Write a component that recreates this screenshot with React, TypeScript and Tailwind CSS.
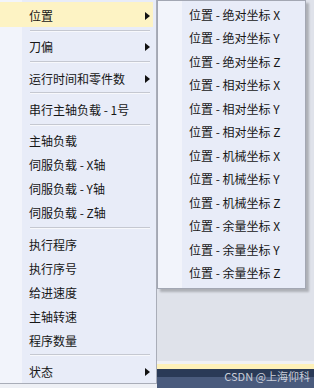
import React from "react";

type Item = { label: string; sub?: boolean; active?: boolean } | "sep";

const mainItems: Item[] = [
  { label: "位置", sub: true, active: true },
  "sep",
  { label: "刀偏", sub: true },
  "sep",
  { label: "运行时间和零件数", sub: true },
  "sep",
  { label: "串行主轴负载 - 1号" },
  "sep",
  { label: "主轴负载" },
  { label: "伺服负载 - X轴" },
  { label: "伺服负载 - Y轴" },
  { label: "伺服负载 - Z轴" },
  "sep",
  { label: "执行程序" },
  { label: "执行序号" },
  { label: "给进速度" },
  { label: "主轴转速" },
  { label: "程序数量" },
  "sep",
  { label: "状态", sub: true },
];

const subItems = [
  "位置 - 绝对坐标 X",
  "位置 - 绝对坐标 Y",
  "位置 - 绝对坐标 Z",
  "位置 - 相对坐标 X",
  "位置 - 相对坐标 Y",
  "位置 - 相对坐标 Z",
  "位置 - 机械坐标 X",
  "位置 - 机械坐标 Y",
  "位置 - 机械坐标 Z",
  "位置 - 余量坐标 X",
  "位置 - 余量坐标 Y",
  "位置 - 余量坐标 Z",
];

function Arrow() {
  return (
    <svg width="5" height="8" viewBox="0 0 5 8" className="shrink-0">
      <polygon points="0,0 5,4 0,8" fill="#111" />
    </svg>
  );
}

export default function App() {
  return (
    <div
      className="w-[314px] h-[388px] overflow-hidden flex bg-[#dfe2ea] text-[12px] text-[#161616] relative"
      style={{ fontFamily: '"Noto Sans CJK SC", "Noto Sans", sans-serif' }}
    >
      {/* Main context menu */}
      <div className="w-[157px] h-full flex flex-col shrink-0">
        <div className="h-[384px] flex flex-col pt-[2px] border-r border-b border-[#a9adb8] bg-[linear-gradient(to_right,#f2f4fb_22px,#e8ecf8_22px)]">
          {mainItems.map((it, i) =>
            it === "sep" ? (
              <div key={i} className="h-[8px] flex flex-col justify-center ml-[30px] mr-[6px]">
                <div className="h-px bg-[#c5c8d1]" />
                <div className="h-px bg-[#f7f8fc]" />
              </div>
            ) : (
              <div
                key={i}
                className={
                  "flex items-center pl-[29px] pr-[3px] pt-[2px] mr-[3px] shrink-0 " +
                  (it.active ? "h-[25px] bg-[#fdf3c4]" : "h-[24px]")
                }
              >
                <span className="flex-1 whitespace-nowrap leading-none">{it.label}</span>
                {it.sub && <Arrow />}
              </div>
            )
          )}
        </div>
        <div className="flex-1 bg-[#eef0f5]" />
      </div>

      {/* Right side: submenu over window background */}
      <div className="flex-1 flex flex-col">
        <div className="w-[149px] h-[289px] shrink-0 flex flex-col pt-[2px] border border-[#a3a7b3] shadow-[3px_3px_2px_rgba(0,0,0,0.22)] bg-[linear-gradient(to_right,#f2f4fb_24px,#e8ecf8_24px)]">
          {subItems.map((s) => (
            <div key={s} className="h-[23.5px] shrink-0 flex items-center pl-[31px]">
              <span className="whitespace-nowrap leading-none">{s}</span>
            </div>
          ))}
        </div>
        <div className="flex-1" />
        <div className="h-[3px] bg-[#eff0f4]" />
        <div className="h-[5px] bg-[#fdf0b8]" />
        <div className="h-[8px] bg-[#2a3a57]" />
        <div className="h-[11px] bg-[#4a5b7d]" />
      </div>

      <div className="absolute right-[4px] bottom-[6px] text-[11px] leading-none text-[#c9ced9] whitespace-nowrap">
        CSDN @上海仰科
      </div>
    </div>
  );
}
